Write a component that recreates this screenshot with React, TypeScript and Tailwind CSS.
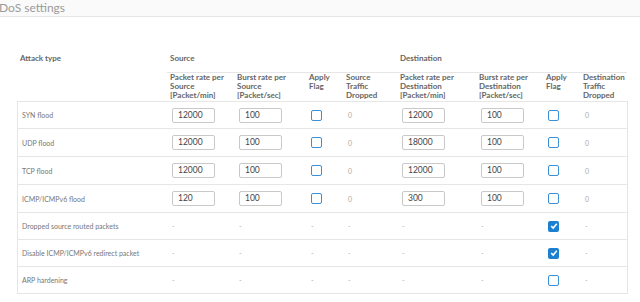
import React from "react";

type Row = {
  name: string;
  h: string;
  src?: [string, string];
  dst?: [string, string];
  srcFlag?: boolean;
  dstFlag: boolean;
};

const ROWS: Row[] = [
  { name: "SYN flood", h: "h-[27px]", src: ["12000", "100"], dst: ["12000", "100"], srcFlag: false, dstFlag: false },
  { name: "UDP flood", h: "h-[28px]", src: ["12000", "100"], dst: ["18000", "100"], srcFlag: false, dstFlag: false },
  { name: "TCP flood", h: "h-[28px]", src: ["12000", "100"], dst: ["12000", "100"], srcFlag: false, dstFlag: false },
  { name: "ICMP/ICMPv6 flood", h: "h-[28px]", src: ["120", "100"], dst: ["300", "100"], srcFlag: false, dstFlag: false },
  { name: "Dropped source routed packets", h: "h-[27px]", dstFlag: true },
  { name: "Disable ICMP/ICMPv6 redirect packet", h: "h-[27px]", dstFlag: true },
  { name: "ARP hardening", h: "h-[27px]", dstFlag: false },
];

const COLS = "grid-cols-[150px_67px_72px_37px_54px_79px_67px_37px_47px]";

function NumInput({ value }: { value: string }) {
  return (
    <div className="w-[43px] h-[15px] border border-[#c9c9c9] rounded-[2px] bg-white pl-[5px] text-[8.5px] leading-[13px] text-[#444]">
      {value}
    </div>
  );
}

function Check({ checked }: { checked: boolean }) {
  if (checked) {
    return (
      <div className="w-[11px] h-[11px] rounded-[2px] bg-[#1c7fd0] flex items-center justify-center">
        <svg width="8" height="8" viewBox="0 0 8 8">
          <path d="M1.2 4.2 L3.2 6 L6.8 1.8" fill="none" stroke="white" strokeWidth="1.6" />
        </svg>
      </div>
    );
  }
  return <div className="w-[11px] h-[11px] rounded-[2px] border-[1.5px] border-[#3a90d6] bg-white" />;
}

function Dim({ children }: { children: React.ReactNode }) {
  return <span className="text-[7px] leading-[8px] text-[#aaa]">{children}</span>;
}

function Cell({ children }: { children: React.ReactNode }) {
  return <div className="pl-[4px] h-full flex items-center">{children}</div>;
}

export default function App() {
  return (
    <div className="w-[640px] h-[302px] bg-white overflow-hidden font-['Lato','Liberation_Sans',sans-serif]">
      {/* Title bar */}
      <div className="h-[17px] bg-[#fafafa] border-b border-[#e6e6e6] flex items-center">
        <span className="-ml-[1px] text-[12px] leading-none text-[#9a9a9a]">DoS settings</span>
      </div>

      <div className="pl-[17px] pt-[33px]">
        {/* Group header */}
        <div className={`grid ${COLS} text-[8px] font-bold text-[#666]`}>
          <div className="pl-[3px] leading-[16px]">Attack type</div>
          <div className="col-span-4 h-[23px] border-b border-[#e6e6e6] pl-[3px] leading-[16px]">Source</div>
          <div className="col-span-4 h-[23px] border-b border-[#e6e6e6] pl-[3px] leading-[16px]">Destination</div>
        </div>

        {/* Sub header */}
        <div className={`grid ${COLS} h-[28px] text-[8px] font-bold text-[#666] leading-[9px]`}>
          <div />
          <div className="pl-[3px] pr-[8px]">Packet rate per Source [Packet/min]</div>
          <div className="pl-[3px] pr-[8px]">Burst rate per Source [Packet/sec]</div>
          <div className="pl-[3px] pr-[8px]">Apply Flag</div>
          <div className="pl-[3px] pr-[8px]">Source Traffic Dropped</div>
          <div className="pl-[3px] pr-[8px]">Packet rate per Destination [Packet/min]</div>
          <div className="pl-[3px] pr-[8px]">Burst rate per Destination [Packet/sec]</div>
          <div className="pl-[3px] pr-[8px]">Apply Flag</div>
          <div className="pl-[3px]">Destination Traffic Dropped</div>
        </div>

        {/* Rows */}
        <div className="w-[611px] border-t border-l border-r border-[#e6e6e6]">
          {ROWS.map((r) => (
            <div key={r.name} className={`grid ${COLS} ${r.h} border-b border-[#e6e6e6]`}>
              <Cell><span className="text-[7px] leading-[8px] text-[#777]">{r.name}</span></Cell>
              <Cell>{r.src ? <NumInput value={r.src[0]} /> : <Dim>-</Dim>}</Cell>
              <Cell>{r.src ? <NumInput value={r.src[1]} /> : <Dim>-</Dim>}</Cell>
              <Cell>{r.src ? <Check checked={!!r.srcFlag} /> : <Dim>-</Dim>}</Cell>
              <Cell>{r.src ? <Dim>0</Dim> : <Dim>-</Dim>}</Cell>
              <Cell>{r.dst ? <NumInput value={r.dst[0]} /> : <Dim>-</Dim>}</Cell>
              <Cell>{r.dst ? <NumInput value={r.dst[1]} /> : <Dim>-</Dim>}</Cell>
              <Cell><Check checked={r.dstFlag} /></Cell>
              <Cell>{r.dst ? <Dim>0</Dim> : <Dim>-</Dim>}</Cell>
            </div>
          ))}
        </div>
      </div>
    </div>
  );
}
